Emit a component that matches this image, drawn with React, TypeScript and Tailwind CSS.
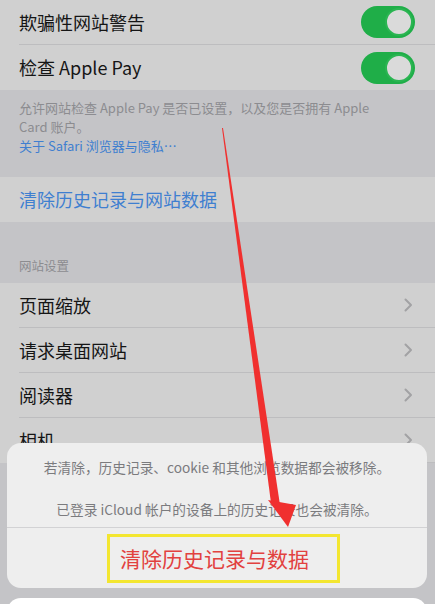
const cjk = { fontFamily: '"Noto Sans CJK SC", "Noto Sans", sans-serif' };

function Toggle() {
  return (
    <div className="flex h-[32px] w-[54px] items-center justify-end rounded-full bg-[#1fae48] p-[2px]">
      <div className="h-[28px] w-[28px] rounded-full border-2 border-[#2bb552] bg-[#dadada]" />
    </div>
  );
}

function Chevron() {
  return (
    <svg width="9" height="14" viewBox="0 0 9 14" className="mr-[22px]">
      <polyline points="1.5,1.5 7,7 1.5,12.5" fill="none" stroke="#a2a2a4" strokeWidth="2" strokeLinecap="round" strokeLinejoin="round" />
    </svg>
  );
}

function Row({ label, right, last }: { label: string; right?: React.ReactNode; last?: boolean }) {
  return (
    <div className="flex h-[45px] items-center bg-[#d0d0d0] pl-[19px]">
      <div className={"flex h-full flex-1 items-center justify-between " + (last ? "" : "border-b border-[#bdbdbf]")}>
        <span className="text-[18px] text-[#151515]">{label}</span>
        {right}
      </div>
    </div>
  );
}

export default function App() {
  return (
    <div className="relative h-[604px] w-[448px] overflow-hidden bg-white" style={cjk}>
      <div className="flex h-full w-[435px] flex-col bg-[#c4c4c7]">
        <Row label="欺骗性网站警告" right={<div className="mr-[20px]"><Toggle /></div>} />
        <Row label="检查 Apple Pay" right={<div className="mr-[20px]"><Toggle /></div>} last />

        <div className="px-[19px] pt-[8px] text-[13px] leading-[19px] text-[#8c8c90]">
          <p>允许网站检查 Apple Pay 是否已设置，以及您是否拥有 Apple</p>
          <p>Card 账户。</p>
          <p className="text-[#3f7fd0]">关于 Safari 浏览器与隐私…</p>
        </div>

        <div className="mt-[22px] flex h-[45px] items-center bg-[#d0d0d0] pl-[19px]">
          <span className="text-[18px] text-[#3f7fd0]">清除历史记录与网站数据</span>
        </div>

        <div className="px-[19px] pb-[8px] pt-[35px] text-[12.5px] leading-[18px] text-[#8c8c90]">网站设置</div>

        <Row label="页面缩放" right={<Chevron />} />
        <Row label="请求桌面网站" right={<Chevron />} />
        <Row label="阅读器" right={<Chevron />} />
        <Row label="相机" right={<Chevron />} />
      </div>

      {/* action sheet */}
      <div className="absolute left-[7px] top-[443px] w-[420px]">
        <div className="overflow-hidden rounded-[14px] bg-[#eeeeee]">
          <div className="flex flex-col items-center gap-[22px] pb-[8px] pt-[14px] text-[13.7px] leading-[20px] text-[#7b7b7e]">
            <p>若清除，历史记录、cookie 和其他浏览数据都会被移除。</p>
            <p>已登录 iCloud 帐户的设备上的历史记录也会被清除。</p>
          </div>
          <div className="border-t border-[#d2d2d4] pb-[5px] pt-[6px]">
            <div className="ml-[100px] flex h-[49px] w-[233px] items-center border-[3px] border-[#f3e630] pl-[10px]">
              <span className="text-[21px] text-[#e2413f]">清除历史记录与数据</span>
            </div>
          </div>
        </div>
        <div className="mt-[10px] h-[40px] rounded-[14px] bg-white" />
      </div>

      {/* red pointer arrow */}
      <svg className="pointer-events-none absolute left-0 top-0" width="448" height="604" viewBox="0 0 448 604">
        <polygon points="222,128 223,128 280,505 271,503" fill="#f0302f" />
        <polygon points="268,500 296,505 288,527" fill="#f0302f" />
      </svg>
    </div>
  );
}
